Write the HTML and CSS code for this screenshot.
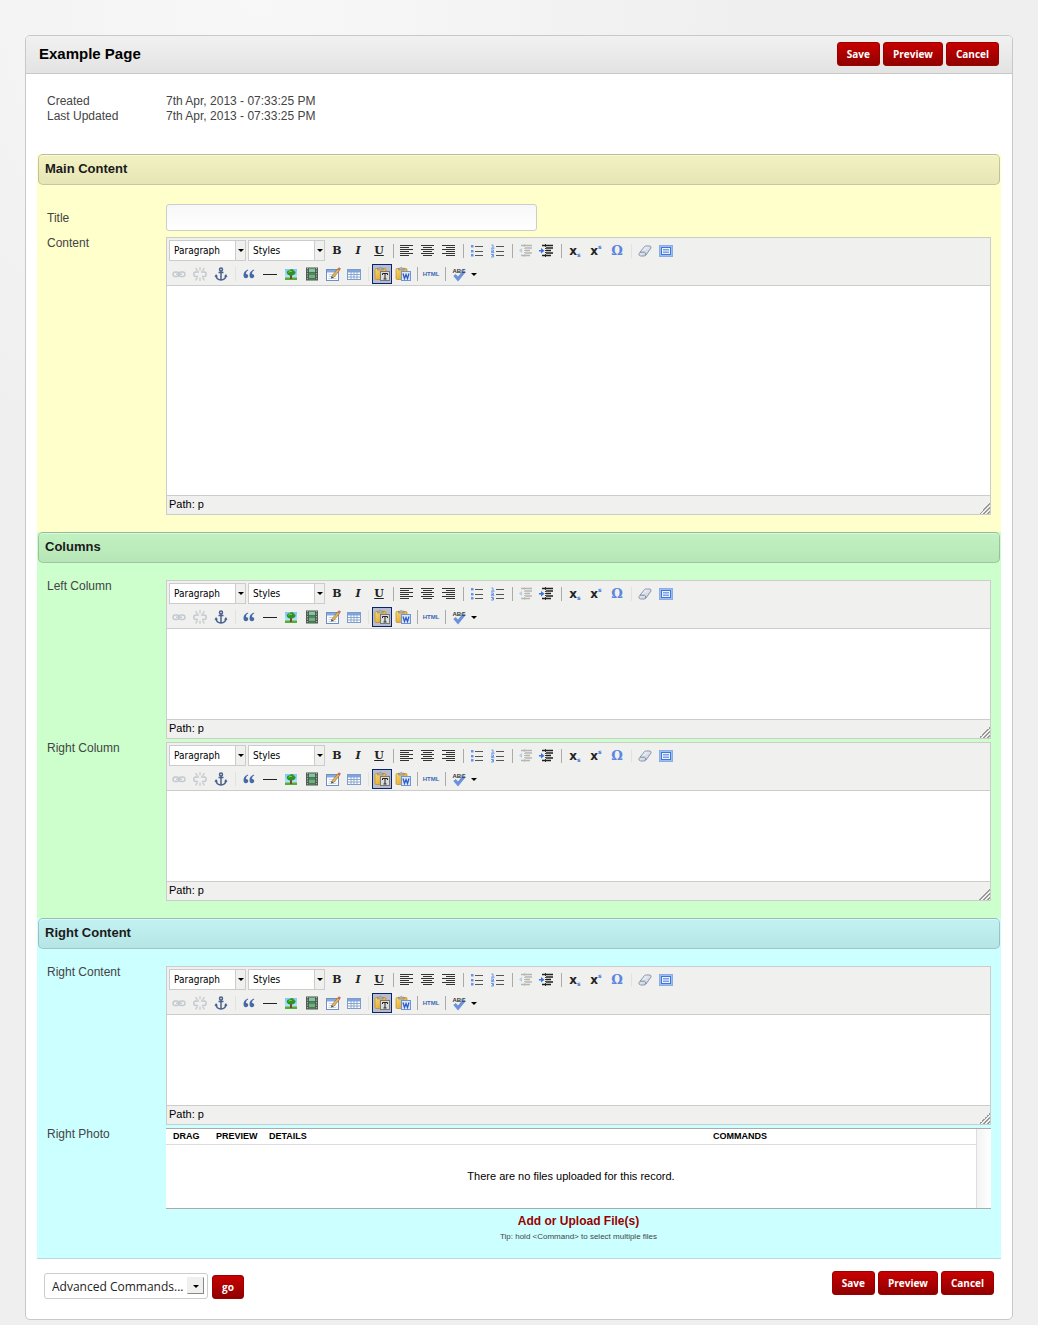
FILE: index.html
```html
<!DOCTYPE html>
<html lang="en">
<head>
  <meta charset="UTF-8">
  <meta name="viewport" content="width=device-width, initial-scale=1.0">
  <title>Example Page</title>
  <link rel="stylesheet" href="styles.css">
</head>
<body>
  <!-- toolbar icons -->
  <svg class="sprite" aria-hidden="true">
    <defs>
      <linearGradient id="g-paste" x1="0" y1="0" x2="1" y2="1">
        <stop offset="0" stop-color="#f9d873"/><stop offset="1" stop-color="#d99a1c"/>
      </linearGradient>
      <linearGradient id="g-sky" x1="0" y1="0" x2="0" y2="1">
        <stop offset="0" stop-color="#7fc4f5"/><stop offset="1" stop-color="#cfeaff"/>
      </linearGradient>
      <linearGradient id="g-eraser" x1="0" y1="0" x2="1" y2="1">
        <stop offset="0" stop-color="#fff"/><stop offset="1" stop-color="#b9c3d6"/>
      </linearGradient>
    </defs>
    <symbol id="i-left" viewBox="0 0 16 16">
      <path d="M1 2.5h13M1 4.5h9M1 6.5h13M1 8.5h9M1 10.5h13M1 12.5h9" stroke="#333" stroke-width="1.200"/>
    </symbol>
    <symbol id="i-center" viewBox="0 0 16 16">
      <path d="M1 2.5h13M3 4.5h9M1 6.5h13M3 8.5h9M1 10.5h13M3 12.5h9" stroke="#333" stroke-width="1.200"/>
    </symbol>
    <symbol id="i-right" viewBox="0 0 16 16">
      <path d="M1 2.5h13M5 4.5h9M1 6.5h13M5 8.5h9M1 10.5h13M5 12.5h9" stroke="#333" stroke-width="1.200"/>
    </symbol>
    <symbol id="i-bullets" viewBox="0 0 16 16">
      <path d="M6 3.5h8M6 8.5h8M6 12.5h8" stroke="#555"/>
      <path d="M2 2h2.500v2.500H2zM2 7h2.500v2.500H2zM2 11h2.500v2.500H2z" fill="#6a94e8"/>
    </symbol>
    <symbol id="i-numbers" viewBox="0 0 16 16">
      <path d="M6 3.5h8M6 8.5h8M6 12.5h8" stroke="#555"/>
      <path d="M1.500 2h1.500v3M1 5.200h3.500M1 7h2.500v1.500h-2v1.200h2.800M1 11.500h2.500v2.500h-2.500M2 12.700h1.500" fill="none" stroke="#6a94e8"/>
    </symbol>
    <symbol id="i-outdent" viewBox="0 0 16 16">
      <path d="M3 2.500h11M7 5h7M7 7.500h5M7 10h7M3 12.500h9" stroke="#b5b5b5" stroke-width="1.400"/>
      <path d="M6.500 1v14" stroke="#c4c4c4" stroke-dasharray="1 1"/>
      <path d="M4 5v5L1 7.500z" fill="#b9cbe8"/>
    </symbol>
    <symbol id="i-indent" viewBox="0 0 16 16">
      <path d="M3 2.500h11M7 5h7M7 7.500h5M7 10h7M3 12.500h9" stroke="#222" stroke-width="1.600"/>
      <path d="M6.500 1v14" stroke="#333" stroke-dasharray="1 1"/>
      <path d="M0 7h2V5l3.500 2.700L2 10.500V8.500H0z" fill="#3c74dc"/>
    </symbol>
    <symbol id="i-eraser" viewBox="0 0 16 16">
      <path d="M2 10.500 7.500 3.500Q8 3 9 3h4q1.500.5 1 2L9 12q-.7 1-2 1H3.500Q1.500 12.500 2 10.500z" fill="url(#g-eraser)" stroke="#8d99af"/>
      <path d="M3 9.200h4.500q1.500.5 1.300 2.800" fill="none" stroke="#7d899f"/>
    </symbol>
    <symbol id="i-fullscreen" viewBox="0 0 16 16">
      <rect x="1.500" y="2.500" width="13" height="11" fill="#9dbdf0" stroke="#8badE6"/>
      <rect x="3.500" y="4.500" width="9" height="7" fill="#e8f1ff" stroke="#4376d4"/>
      <path d="M5 6.500h6M5 8h6M5 9.500h6" stroke="#7da2e6"/>
    </symbol>
    <symbol id="i-link" viewBox="0 0 16 16">
      <g fill="none" stroke="#c3c8d2" stroke-width="1.400">
        <rect x="2" y="6" width="6" height="4.500" rx="2.200"/>
        <rect x="8" y="6" width="6" height="4.500" rx="2.200"/>
        <path d="M5 8.200h6"/>
      </g>
    </symbol>
    <symbol id="i-unlink" viewBox="0 0 16 16">
      <g fill="none" stroke="#c3c8d2" stroke-width="1.400">
        <path d="M7 6H4a2.200 2.200 0 0 0 0 4.500h2M9 6h3a2.200 2.200 0 0 1 0 4.500h-2"/>
        <path d="M8 1v3.500M3.500 2l2 3M12.500 2l-2 3M8 11.500v3.500M3.500 14.500l2-3M12.500 14.500l-2-3" stroke="#cfcfcf"/>
      </g>
    </symbol>
    <symbol id="i-anchor" viewBox="0 0 16 16">
      <g fill="none" stroke="#4a618f" stroke-width="1.500">
        <circle cx="8" cy="3.500" r="1.500"/>
        <path d="M8 5v9M5.500 6.500h5M3 9.500c.3 3 2.200 4.300 5 4.500 2.800-.2 4.700-1.500 5-4.500"/>
      </g>
      <path d="M1.500 11 3 8l2 2.500zM14.500 11 13 8l-2 2.500z" fill="#4a618f"/>
    </symbol>
    <symbol id="i-quote" viewBox="0 0 16 16">
      <path d="M7 3.500C4 4.500 2.500 6.500 2.500 9.200c0 1.800 1 3 2.400 3s2.300-.9 2.300-2.200S6.200 7.800 5 7.900C5 6.400 5.700 5.300 7.200 4.600zM13 3.500c-3 1-4.500 3-4.500 5.700 0 1.800 1 3 2.400 3s2.300-.9 2.300-2.200-1-2.200-2.200-2.100c0-1.500.7-2.600 2.200-3.300z" fill="#4468a8"/>
    </symbol>
    <symbol id="i-hr" viewBox="0 0 16 16"><path d="M1 8.500h14" stroke="#222"/></symbol>
    <symbol id="i-image" viewBox="0 0 16 16">
      <rect x="2" y="3" width="12" height="11" fill="url(#g-sky)"/>
      <path d="M2 11.500h12V14H2z" fill="#54ad35"/>
      <path d="M7 8h2v5H7z" fill="#7a4a20"/>
      <path d="M4 7.500C3 5.500 5 4 6.500 4.500 7.500 2.500 11 3 11 5c2 .3 2 3 .2 3.500C9.500 10 5 10 4 7.500z" fill="#2c9420"/>
      <path d="M5.500 6.500C6 5.500 8 5 9 5.500" fill="none" stroke="#86d84c"/>
    </symbol>
    <symbol id="i-media" viewBox="0 0 16 16">
      <rect x="2" y="1.500" width="12" height="13" fill="#4d5750"/>
      <path d="M5 2.500h6v5H5z" fill="#83c5a0"/><path d="M5 8.500h6v5H5z" fill="#6fb07c"/>
      <path d="M5 6h6v1.500H5zM5 12h6v1.500H5z" fill="#3d7f48"/>
      <path d="M3.500 2v12M12.500 2v12" stroke="#aab3ab" stroke-width="1.200" stroke-dasharray="1.300 1.200"/>
    </symbol>
    <symbol id="i-edit" viewBox="0 0 16 16">
      <rect x="1.500" y="3.500" width="12" height="11" fill="#fff" stroke="#6d8fc4"/>
      <path d="M2 4h11v2.500H2z" fill="#86a9e0"/>
      <path d="M3.500 8.500h8M3.500 10.500h8M3.500 12.500h8" stroke="#c3d3ec"/>
      <path d="M6.500 10.500 12.500 3l2 1.500-6 7.200z" fill="#e8b358" stroke="#8c6a35" stroke-width=".6"/>
      <path d="M12.500 3 14 1.300l2 1.500-1.500 1.700z" fill="#d06a5c"/>
      <path d="M6.500 10.500 6 12.600l2.500-.9z" fill="#333"/>
    </symbol>
    <symbol id="i-table" viewBox="0 0 16 16">
      <rect x="1.500" y="3.500" width="13" height="10" fill="#fff" stroke="#7f9cc9"/>
      <path d="M2 4h12v2.500H2z" fill="#7fa3dd"/>
      <path d="M2 8.500h12M2 11h12M5 6v7.500M8 6v7.500M11 6v7.500" stroke="#8aa6d2"/>
    </symbol>
    <symbol id="i-clipboard" viewBox="0 0 16 16">
      <rect x="1" y="2.500" width="11" height="11" rx="1" fill="url(#g-paste)" stroke="#c28a20" stroke-width=".7"/>
      <path d="M3.500 4V2.200h1.700L6.300 1l1.200 1.200h1.700V4z" fill="#b5b5b5" stroke="#777" stroke-width=".5"/>
    </symbol>
    <symbol id="i-spell" viewBox="0 0 16 16">
      <path d="M3.500 9 7 13 13.500 5" fill="none" stroke="#6c92dc" stroke-width="3.200"/>
      <text x="8" y="7" text-anchor="middle" class="icon-text">ABC</text>
    </symbol>
  </svg>

  <!-- toolbar shared by every rich text field -->
  <template id="toolbar-template">
    <div class="toolbar-row">
      <span class="pick"><select aria-label="Format"><option>Paragraph</option><option>Heading 1</option><option>Heading 2</option></select></span>
      <span class="pick"><select aria-label="Styles"><option>Styles</option></select></span>
      <button type="button" class="tool letter" title="Bold"><b>B</b></button>
      <button type="button" class="tool letter" title="Italic"><i>I</i></button>
      <button type="button" class="tool letter" title="Underline"><u>U</u></button>
      <span class="sep"></span>
      <button type="button" class="tool" title="Align left"><svg><use href="#i-left"/></svg></button>
      <button type="button" class="tool" title="Align center"><svg><use href="#i-center"/></svg></button>
      <button type="button" class="tool" title="Align right"><svg><use href="#i-right"/></svg></button>
      <span class="sep"></span>
      <button type="button" class="tool" title="Unordered list"><svg><use href="#i-bullets"/></svg></button>
      <button type="button" class="tool" title="Ordered list"><svg><use href="#i-numbers"/></svg></button>
      <span class="sep"></span>
      <button type="button" class="tool" title="Outdent"><svg><use href="#i-outdent"/></svg></button>
      <button type="button" class="tool" title="Indent"><svg><use href="#i-indent"/></svg></button>
      <span class="sep"></span>
      <button type="button" class="tool script" title="Subscript">x<sub>s</sub></button>
      <button type="button" class="tool script" title="Superscript">x<sup>s</sup></button>
      <button type="button" class="tool omega" title="Insert special character">Ω</button>
      <span class="sep faint"></span>
      <button type="button" class="tool" title="Remove formatting"><svg><use href="#i-eraser"/></svg></button>
      <button type="button" class="tool" title="Toggle fullscreen"><svg><use href="#i-fullscreen"/></svg></button>
    </div>
    <div class="toolbar-row">
      <button type="button" class="tool" title="Insert link" disabled><svg><use href="#i-link"/></svg></button>
      <button type="button" class="tool" title="Unlink" disabled><svg><use href="#i-unlink"/></svg></button>
      <button type="button" class="tool" title="Insert anchor"><svg><use href="#i-anchor"/></svg></button>
      <span class="sep faint"></span>
      <button type="button" class="tool" title="Blockquote"><svg><use href="#i-quote"/></svg></button>
      <button type="button" class="tool" title="Horizontal rule"><svg><use href="#i-hr"/></svg></button>
      <button type="button" class="tool" title="Insert image"><svg><use href="#i-image"/></svg></button>
      <button type="button" class="tool" title="Insert media"><svg><use href="#i-media"/></svg></button>
      <button type="button" class="tool" title="Edit table"><svg><use href="#i-edit"/></svg></button>
      <button type="button" class="tool" title="Insert table"><svg><use href="#i-table"/></svg></button>
      <span class="sep faint"></span>
      <button type="button" class="tool active" title="Paste as plain text"><svg viewBox="0 0 16 16"><use href="#i-clipboard" width="16" height="16"/><rect x="6.500" y="5.500" width="9" height="9" fill="#dcdcdc" stroke="#777"/><path d="M8.500 9V7.500h5V9M11 7.500v5.500M9.500 13h3" fill="none" stroke="#222"/></svg></button>
      <button type="button" class="tool" title="Paste from Word"><svg viewBox="0 0 16 16"><use href="#i-clipboard" width="16" height="16"/><rect x="6.500" y="5.500" width="9" height="9" fill="#dbe8ff" stroke="#6f93d6"/><path d="M8 7.500 9.500 12.500 11 8.500l1.500 4L14 7.500" fill="none" stroke="#2c5cc0" stroke-width="1.300"/></svg></button>
      <span class="sep"></span>
      <button type="button" class="tool html" title="Edit HTML source">HTML</button>
      <span class="sep"></span>
      <button type="button" class="tool" title="Toggle spellchecker"><svg><use href="#i-spell"/></svg></button>
      <button type="button" class="tool more" title="Spellchecker languages"></button>
    </div>
  </template>

  <form class="panel">
    <header class="panel-header">
      <h1>Example Page</h1>
      <div class="buttons">
        <button type="submit" class="button">Save</button>
        <button type="button" class="button">Preview</button>
        <button type="button" class="button">Cancel</button>
      </div>
    </header>

    <div class="panel-body">
      <dl class="meta">
        <dt>Created</dt><dd>7th Apr, 2013 - 07:33:25 PM</dd>
        <dt>Last Updated</dt><dd>7th Apr, 2013 - 07:33:25 PM</dd>
      </dl>

      <section class="group yellow">
        <h2>Main Content</h2>
        <div class="fields">
          <div class="row title-row">
            <label for="title">Title</label>
            <input type="text" id="title" class="text-input">
          </div>
          <div class="row">
            <label for="content">Content</label>
            <div class="editor tall">
              <div class="toolbar"></div>
              <textarea id="content"></textarea>
              <div class="status">Path: p</div>
            </div>
          </div>
        </div>
      </section>

      <section class="group green">
        <h2>Columns</h2>
        <div class="fields">
          <div class="row">
            <label for="left-column">Left Column</label>
            <div class="editor">
              <div class="toolbar"></div>
              <textarea id="left-column"></textarea>
              <div class="status">Path: p</div>
            </div>
          </div>
          <div class="row">
            <label for="right-column">Right Column</label>
            <div class="editor">
              <div class="toolbar"></div>
              <textarea id="right-column"></textarea>
              <div class="status">Path: p</div>
            </div>
          </div>
        </div>
      </section>

      <section class="group blue">
        <h2>Right Content</h2>
        <div class="fields">
          <div class="row">
            <label for="right-content">Right Content</label>
            <div class="editor">
              <div class="toolbar"></div>
              <textarea id="right-content"></textarea>
              <div class="status">Path: p</div>
            </div>
          </div>
          <div class="row">
            <span class="label" id="photo-label">Right Photo</span>
            <div class="photo">
              <div class="files">
                <table aria-labelledby="photo-label">
                  <thead>
                    <tr>
                      <th class="drag">Drag</th>
                      <th class="preview">Preview</th>
                      <th>Details</th>
                      <th class="commands">Commands</th>
                    </tr>
                  </thead>
                  <tbody>
                    <tr><td colspan="4">There are no files uploaded for this record.</td></tr>
                  </tbody>
                </table>
              </div>
              <a class="upload" href="#">Add or Upload File(s)</a>
              <p class="tip">Tip: hold &lt;Command&gt; to select multiple files</p>
            </div>
          </div>
        </div>
      </section>

      <footer class="panel-footer">
        <div class="advanced">
          <span class="pick large"><select aria-label="Advanced Commands"><option>Advanced Commands...</option></select></span>
          <button type="button" class="button">go</button>
        </div>
        <div class="buttons">
          <button type="submit" class="button">Save</button>
          <button type="button" class="button">Preview</button>
          <button type="button" class="button">Cancel</button>
        </div>
      </footer>
    </div>
  </form>

  <script src="editor.js"></script>
</body>
</html>
```

FILE: styles.css
```css
* {
  box-sizing: border-box;
}
body {
  margin: 0;
  padding: 35px 25px 5px;
  background: #efefef radial-gradient(circle at 260px 0, #f8f8f8, #efefef 500px) no-repeat;
  font-family: "Liberation Sans", Arial, sans-serif;
  font-size: 12px;
  color: #444;
}
h1, h2, p, dl, dd {
  margin: 0;
}
button, input, select, textarea {
  margin: 0;
  font-family: inherit;
}
.sprite {
  position: absolute;
  width: 0;
  height: 0;
}
.panel {
  background: #fff;
  border: 1px solid #c8c8c8;
  border-radius: 5px;
}
.panel-header {
  display: flex;
  align-items: center;
  justify-content: space-between;
  height: 38px;
  padding: 0 13px 2px;
  border-bottom: 1px solid #c8c8c8;
  border-radius: 4px 4px 0 0;
  background: linear-gradient(#f1f1f1, #e3e3e3);
}
.panel-header h1 {
  font-size: 15px;
  color: #000;
}
.panel-body {
  padding: 0 11px;
}
.buttons {
  display: flex;
  gap: 3px;
}
.button {
  height: 24px;
  padding: 0 9px;
  border: 1px solid #900;
  border-radius: 3px;
  background: linear-gradient(#c80000, #900000);
  color: #fff;
  font-family: "Open Sans", sans-serif;
  font-size: 10px;
  font-weight: 700;
  cursor: pointer;
}
.meta {
  display: grid;
  grid-template-columns: 119px 1fr;
  padding: 20px 10px 30px;
  line-height: 15px;
}

/* coloured groups */
.group h2 {
  height: 31px;
  margin: 0 1px;
  padding: 0 6px;
  border: 1px solid rgba(0, 0, 0, 0.18);
  border-radius: 5px;
  background: linear-gradient(rgba(0, 0, 0, 0.05), rgba(0, 0, 0, 0.1));
  box-shadow: inset 0 1px rgba(255, 255, 255, 0.4);
  font-size: 13px;
  line-height: 28px;
  color: #1a1a1a;
}
.yellow {
  background: #ffffcc;
}
.green {
  background: #ccffcc;
}
.blue {
  background: #ccffff;
  border-bottom: 1px solid #b0dcdc;
}
.fields {
  display: flex;
  flex-direction: column;
  gap: 3px;
  padding: 17px 10px;
}
.row {
  display: grid;
  grid-template-columns: 119px minmax(0, 1fr);
}
.row label,
.row .label {
  line-height: 12px;
}
.title-row {
  align-items: center;
  padding: 2px 0 3px;
}
.text-input {
  width: 45%;
  height: 27px;
  padding: 0 6px;
  border: 1px solid #ccc;
  border-radius: 3px;
  background: linear-gradient(#f7f7f7, #fff);
}

/* rich text editor */
.editor {
  border: 1px solid #ccc;
  background: #f0f0ee;
}
.toolbar {
  display: flex;
  flex-direction: column;
  gap: 3px;
  padding: 2px 2px 1px;
  border-bottom: 1px solid #ccc;
}
.toolbar-row {
  display: flex;
  align-items: center;
  gap: 1px;
}
.pick {
  position: relative;
  width: 77px;
  height: 21px;
  margin-right: 1px;
  border: 1px solid #ccc;
  background: #fff;
}
.pick select {
  width: 100%;
  height: 100%;
  padding: 0 10px 0 4px;
  border: none;
  background: transparent;
  appearance: none;
  font-family: "DejaVu Sans Condensed", "DejaVu Sans", sans-serif;
  font-size: 10px;
  color: #000;
}
.pick::before {
  content: "";
  position: absolute;
  top: 0;
  right: 0;
  bottom: 0;
  width: 9px;
  border-left: 1px solid #ccc;
  background: #f0f0ee;
  pointer-events: none;
}
.pick::after {
  content: "";
  position: absolute;
  top: 8px;
  right: 1px;
  border: 3px solid transparent;
  border-top-color: #000;
  border-bottom: none;
  pointer-events: none;
}
.tool {
  display: flex;
  align-items: center;
  justify-content: center;
  width: 20px;
  height: 20px;
  padding: 0;
  border: 1px solid transparent;
  background: none;
  color: #222;
}
.tool svg {
  flex: none;
  width: 16px;
  height: 16px;
}
.tool.active {
  border-color: #0a246a;
  background: #b6bdd2;
}
.tool.letter {
  font-family: "DejaVu Serif", serif;
  font-size: 11px;
  font-weight: 700;
}
.tool.script {
  font-family: "DejaVu Sans", sans-serif;
  font-size: 12px;
  font-weight: 700;
}
.script sub,
.script sup {
  font-size: 6px;
  line-height: 10px;
  color: #3c74dc;
}
.script sub {
  align-self: flex-end;
}
.script sup {
  align-self: flex-start;
}
.tool.omega {
  font-family: "DejaVu Serif", serif;
  font-size: 13px;
  font-weight: 700;
  color: #5a86e0;
}
.tool.html {
  font-size: 6px;
  font-weight: 700;
  color: #3f66b4;
}
.tool.more {
  width: 8px;
}
.tool.more::after {
  content: "";
  border: 3px solid transparent;
  border-top-color: #000;
  border-bottom: none;
}
.icon-text {
  font-family: "Liberation Sans", sans-serif;
  font-size: 6px;
  font-weight: 700;
  fill: #333;
}
.sep {
  width: 6px;
  height: 14px;
  background: linear-gradient(#aaa, #aaa) center / 1px 100% no-repeat;
}
.sep.faint {
  background-image: linear-gradient(#e2e2e0, #e2e2e0);
}
.editor textarea {
  display: block;
  width: 100%;
  height: 90px;
  padding: 8px;
  border: none;
  background: #fff;
  resize: none;
}
.editor.tall textarea {
  height: 209px;
}
.status {
  height: 19px;
  padding: 0 2px;
  border-top: 1px solid #ccc;
  background: linear-gradient(135deg, transparent 50%, #999 50%, #999 58%, transparent 58%, transparent 68%, #999 68%, #999 76%, transparent 76%, transparent 86%, #999 86%, #999 94%, transparent 94%) right bottom / 11px 11px no-repeat;
  font-size: 11px;
  line-height: 17px;
  color: #000;
}

/* photo list */
.photo {
  text-align: center;
}
.files {
  padding-right: 15px;
  border-top: 1px solid #aaa;
  border-bottom: 1px solid #aaa;
  background: linear-gradient(90deg, #ddd 1px, #f3f3f3 1px, #fff) right / 15px 100% no-repeat #fff;
}
.files table {
  width: 100%;
  border-collapse: collapse;
  table-layout: fixed;
  color: #000;
}
.files th {
  height: 15px;
  padding: 0;
  border-bottom: 1px solid #ddd;
  font-size: 9px;
  line-height: 14px;
  text-align: left;
  text-transform: uppercase;
}
.files .drag {
  width: 50px;
  padding-left: 7px;
}
.files .preview {
  width: 53px;
}
.files .commands {
  width: 263px;
}
.files td {
  height: 64px;
  padding: 0;
  font-size: 11px;
}
.upload {
  display: block;
  padding-top: 4px;
  font-weight: 700;
  line-height: 16px;
  color: #900;
  text-decoration: none;
}
.tip {
  padding: 2px 0 7px;
  font-size: 8px;
  line-height: 12px;
}
.blue .fields {
  padding-bottom: 8px;
}

.panel-footer {
  display: flex;
  align-items: flex-start;
  justify-content: space-between;
  padding: 12px 7px 20px;
}
.advanced {
  display: flex;
  align-items: flex-end;
  gap: 3px;
  padding-top: 2px;
}
.pick.large {
  width: 164px;
  height: 26px;
  border-radius: 3px;
}
.pick.large select {
  padding: 0 20px 0 7px;
  font-family: "Open Sans", sans-serif;
  font-size: 12px;
  color: #222;
}
.pick.large::before {
  top: 3px;
  right: 3px;
  bottom: 4px;
  width: 15px;
  border: 1px solid #888;
  border-top-color: #eee;
  border-left-color: #eee;
}
.pick.large::after {
  top: 11px;
  right: 8px;
}
```

FILE: editor.js
```js
const toolbar = document.getElementById("toolbar-template");

document.querySelectorAll(".toolbar").forEach(function (el) {
  el.appendChild(toolbar.content.cloneNode(true));
});
```
